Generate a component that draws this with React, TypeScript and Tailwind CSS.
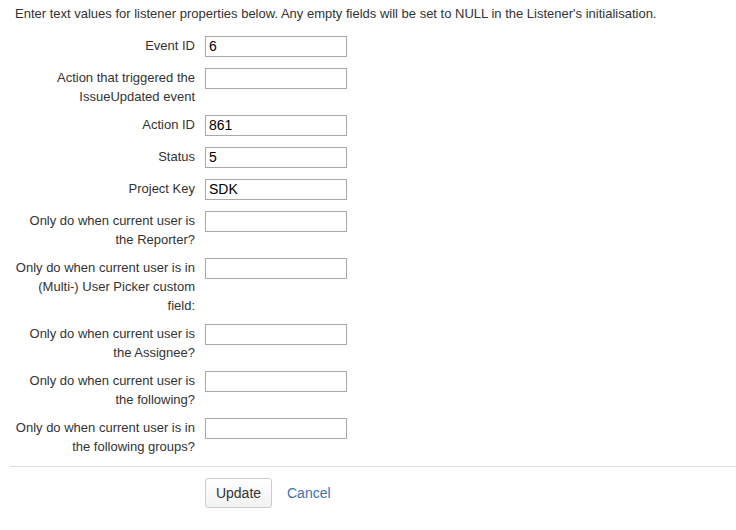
const fields: { label: string[]; value: string }[] = [
  { label: ["Event ID"], value: "6" },
  { label: ["Action that triggered the", "IssueUpdated event"], value: "" },
  { label: ["Action ID"], value: "861" },
  { label: ["Status"], value: "5" },
  { label: ["Project Key"], value: "SDK" },
  { label: ["Only do when current user is", "the Reporter?"], value: "" },
  {
    label: ["Only do when current user is in", "(Multi-) User Picker custom", "field:"],
    value: "",
  },
  { label: ["Only do when current user is", "the Assignee?"], value: "" },
  { label: ["Only do when current user is", "the following?"], value: "" },
  { label: ["Only do when current user is in", "the following groups?"], value: "" },
];

function FieldRow({ label, value }: { label: string[]; value: string }) {
  return (
    <div className="flex items-start gap-[10px] mb-[9px] min-h-[23px]">
      <div className="w-[185px] text-right text-[13px] leading-[19px] text-[#333]">
        {label.map((line) => (
          <div key={line}>{line}</div>
        ))}
      </div>
      <input
        type="text"
        defaultValue={value}
        className="w-[142px] h-[21px] border border-[#a9a9a9] bg-white px-[3px] text-[14px] text-black outline-none"
      />
    </div>
  );
}

export default function App() {
  return (
    <div className="w-[736px] h-[530px] bg-white font-['Liberation_Sans',Arial,sans-serif] text-[#333]">
      <p className="pl-[15px] pt-[5px] text-[13px] leading-[18px]">
        Enter text values for listener properties below. Any empty fields will be set to NULL in the
        Listener's initialisation.
      </p>
      <div className="pl-[10px] pt-[13px]">
        {fields.map((f, i) => (
          <FieldRow key={i} label={f.label} value={f.value} />
        ))}
      </div>
      <div className="ml-[10px] mt-[10px] border-t border-[#dddddd]" />
      <div className="flex items-center gap-[15px] pl-[205px] pt-[11px]">
        <button className="w-[67px] h-[30px] rounded-[3px] border border-[#cccccc] bg-gradient-to-b from-white to-[#f2f2f2] text-[14px] text-[#333]">
          Update
        </button>
        <a href="#" className="text-[14px] text-[#3b73af]">
          Cancel
        </a>
      </div>
    </div>
  );
}
